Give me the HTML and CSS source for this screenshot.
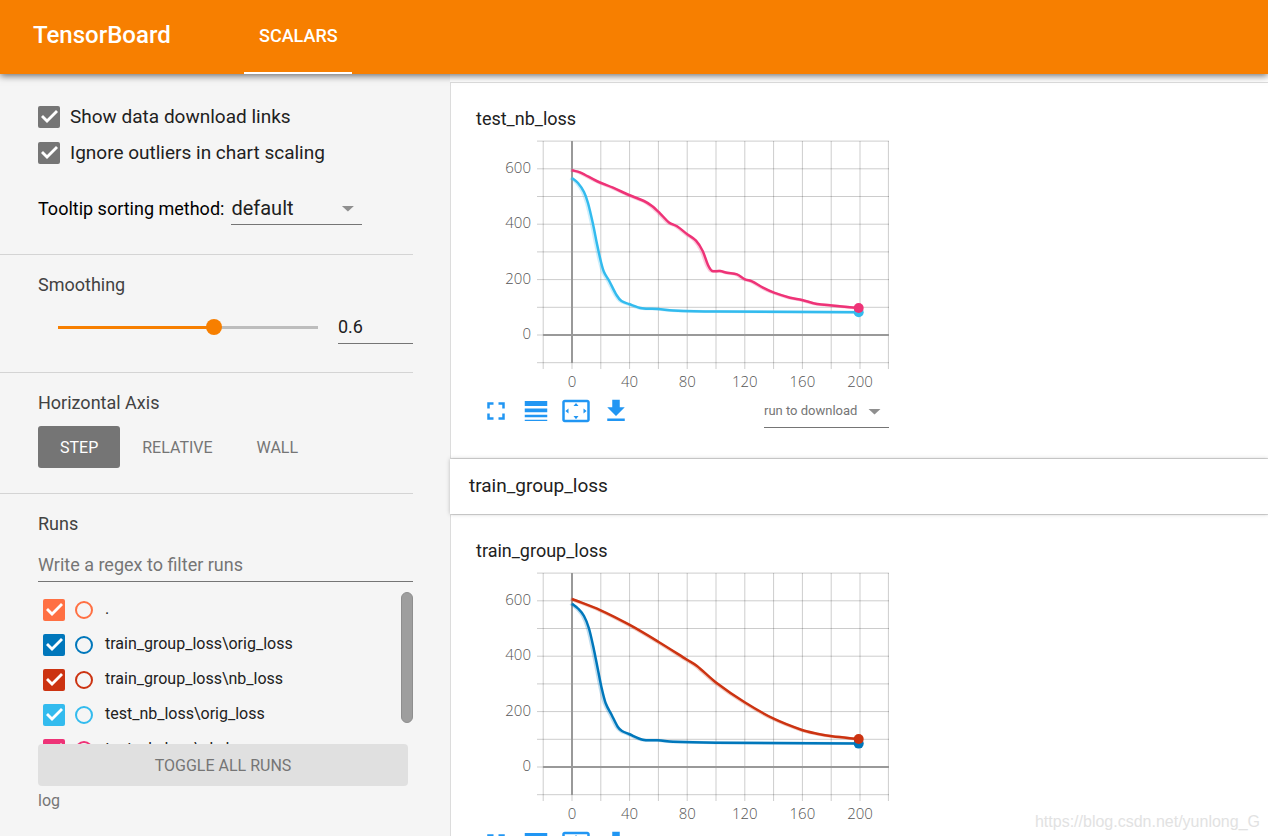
FILE: index.html
```html
<!DOCTYPE html>
<html lang="en">
<head>
<meta charset="utf-8">
<title>TensorBoard</title>
<link rel="stylesheet" href="styles.css">
</head>
<body>
<svg class="defs" aria-hidden="true">
  <symbol id="icon-fullscreen" viewBox="0 0 24 24"><path d="M7 14H5v5h5v-2H7v-3zm-2-4h2V7h3V5H5v5zm12 7h-3v2h5v-5h-2v3zM14 5v2h3v3h2V5h-5z"/></symbol>
  <symbol id="icon-lines" viewBox="0 0 24 24"><path d="M3 17h18v-2H3v2zm0 3h18v-1H3v1zm0-7h18v-3H3v3zm0-9v4h18V4H3z"/></symbol>
  <symbol id="icon-fit" viewBox="0 0 24 24"><path d="M12.01 5.5L10 8h4l-1.99-2.5zM18 10v4l2.5-1.99L18 10zM6 10l-2.5 2.01L6 14v-4zm8 6h-4l2.01 2.5L14 16zm7-13H3c-1.1 0-2 .9-2 2v14c0 1.1.9 2 2 2h18c1.1 0 2-.9 2-2V5c0-1.1-.9-2-2-2zm0 16.01H3V4.99h18v14.02z"/></symbol>
  <symbol id="icon-download" viewBox="0 0 24 24"><path d="M19 9h-4V3H9v6H5l7 7 7-7zM5 18v2h14v-2H5z"/></symbol>
</svg>
<div class="app">
  <header class="toolbar">
    <h1 class="brand">TensorBoard</h1>
    <nav class="tabs"><button class="tab" type="button">SCALARS</button></nav>
  </header>
  <div class="content">
    <aside class="sidebar">
      <section class="panel options">
        <label class="option"><input class="check" type="checkbox" checked><span class="option-text">Show data download links</span></label>
        <label class="option"><input class="check" type="checkbox" checked><span class="option-text">Ignore outliers in chart scaling</span></label>
        <div class="sorting">
          <label for="sort">Tooltip sorting method:</label>
          <span class="dropdown sort-dropdown"><select id="sort"><option>default</option></select></span>
        </div>
      </section>
      <section class="panel smoothing">
        <h2 class="label" id="smooth-label">Smoothing</h2>
        <div class="slider-row">
          <input class="slider" type="range" min="0" max="1" step="0.01" value="0.6" aria-labelledby="smooth-label">
          <input class="slider-value" type="text" value="0.6" aria-labelledby="smooth-label">
        </div>
      </section>
      <section class="panel axis">
        <h2 class="label">Horizontal Axis</h2>
        <div class="axis-buttons">
          <button class="axis-button selected" type="button">STEP</button>
          <button class="axis-button" type="button">RELATIVE</button>
          <button class="axis-button" type="button">WALL</button>
        </div>
      </section>
      <section class="panel runs">
        <h2 class="label">Runs</h2>
        <input class="filter" type="text" placeholder="Write a regex to filter runs" aria-label="Filter runs">
        <div class="run-list">
          <div class="run orange"><input class="check" id="r1" type="checkbox" checked><input class="radio" type="radio" name="only" aria-label="Only ."><label for="r1">.</label></div>
          <div class="run blue"><input class="check" id="r2" type="checkbox" checked><input class="radio" type="radio" name="only" aria-label="Only train_group_loss\orig_loss"><label for="r2">train_group_loss\orig_loss</label></div>
          <div class="run red"><input class="check" id="r3" type="checkbox" checked><input class="radio" type="radio" name="only" aria-label="Only train_group_loss\nb_loss"><label for="r3">train_group_loss\nb_loss</label></div>
          <div class="run cyan"><input class="check" id="r4" type="checkbox" checked><input class="radio" type="radio" name="only" aria-label="Only test_nb_loss\orig_loss"><label for="r4">test_nb_loss\orig_loss</label></div>
          <div class="run pink"><input class="check" id="r5" type="checkbox" checked><input class="radio" type="radio" name="only" aria-label="Only test_nb_loss\nb_loss"><label for="r5">test_nb_loss\nb_loss</label></div>
          <span class="scroll-thumb"></span>
        </div>
        <button class="toggle" type="button">TOGGLE ALL RUNS</button>
        <p class="logdir">log</p>
      </section>
    </aside>
    <main class="main">
      <div class="group-edge"></div>
      <section class="card">
        <h3 class="chart-title">test_nb_loss</h3>
        <svg class="chart" data-chart="test" viewBox="-96 -201 413 260" role="img" aria-label="test_nb_loss chart"></svg>
        <div class="chart-tools">
          <button class="icon-button" type="button" aria-label="Expand"><svg><use href="#icon-fullscreen"/></svg></button>
          <button class="icon-button" type="button" aria-label="Toggle log scale"><svg><use href="#icon-lines"/></svg></button>
          <button class="icon-button" type="button" aria-label="Fit to data"><svg><use href="#icon-fit"/></svg></button>
          <button class="icon-button" type="button" aria-label="Download"><svg><use href="#icon-download"/></svg></button>
          <span class="dropdown run-dropdown"><select aria-label="Run to download"><option>run to download</option></select></span>
        </div>
      </section>
      <h2 class="group-title">train_group_loss</h2>
      <section class="card">
        <h3 class="chart-title">train_group_loss</h3>
        <svg class="chart" data-chart="train" viewBox="-96 -201 413 260" role="img" aria-label="train_group_loss chart"></svg>
        <div class="chart-tools">
          <button class="icon-button" type="button" aria-label="Expand"><svg><use href="#icon-fullscreen"/></svg></button>
          <button class="icon-button" type="button" aria-label="Toggle log scale"><svg><use href="#icon-lines"/></svg></button>
          <button class="icon-button" type="button" aria-label="Fit to data"><svg><use href="#icon-fit"/></svg></button>
          <button class="icon-button" type="button" aria-label="Download"><svg><use href="#icon-download"/></svg></button>
        </div>
      </section>
    </main>
  </div>
  <span class="watermark">https://blog.csdn.net/yunlong_G</span>
</div>
<script src="charts.js"></script>
</body>
</html>
```

FILE: styles.css
```css
* { box-sizing: border-box; }

body {
  margin: 0;
  background: #fff;
  color: #212121;
  font-family: Roboto, "Liberation Sans", sans-serif;
  font-size: 18px;
}

h1, h2, h3, p { margin: 0; font-weight: 400; }
button, input, select { font: inherit; color: inherit; margin: 0; padding: 0; border: 0; background: none; outline: none; border-radius: 0; }
.defs { position: absolute; width: 0; height: 0; }

.app {
  position: relative;
  display: flex;
  flex-direction: column;
  height: calc(100vh - 4px);
  overflow: hidden;
}

.toolbar {
  position: relative;
  z-index: 2;
  flex: none;
  display: flex;
  height: 74px;
  padding-left: 33px;
  background: #f77f00;
  color: #fff;
  box-shadow: 0 2px 7px rgba(0, 0, 0, 0.55);
}
.brand { width: 211px; font-size: 24px; font-weight: 500; line-height: 70px; }
.tabs { display: flex; }
.tab { padding: 0 14px 2px 15px; border-bottom: 2px solid #fff; font-size: 18px; font-weight: 500; }

.content { flex: 1; display: flex; min-height: 0; }

.sidebar { flex: none; width: 450px; padding-right: 37px; background: #f5f5f5; }
.panel { padding-left: 38px; border-bottom: 1px solid #d4d4d4; }
.label { color: #424242; font-size: 18px; line-height: 24px; }

.options { height: 181px; padding-top: 32px; }
.option { display: flex; align-items: center; gap: 10px; height: 22px; margin-bottom: 14px; font-size: 19px; }
.option-text { padding-bottom: 2px; }
.sorting { display: flex; align-items: center; gap: 7px; margin-top: 27px; color: #000; }
.sorting label { font-size: 18px; }

.check {
  appearance: none;
  flex: none;
  width: 22px;
  height: 22px;
  border-radius: 2px;
  background: var(--run, #757575);
}
.check:checked::before {
  content: "";
  display: block;
  width: 22px;
  height: 22px;
  background: #fff;
  clip-path: polygon(3px 11px, 5px 9px, 9px 13px, 18px 4px, 20px 6px, 9px 17px);
}

.dropdown { position: relative; display: flex; border-bottom: 1px solid #757575; color: #212121; }
.dropdown::after {
  content: "";
  position: absolute;
  top: calc(50% - 2px);
  right: 8px;
  width: 13px;
  height: 6px;
  background: #8f8f8f;
  clip-path: polygon(0 0, 100% 0, 50% 100%);
  pointer-events: none;
}
.dropdown select { appearance: none; width: 100%; }
.sort-dropdown { width: 131px; height: 34px; font-size: 20px; }

.smoothing { height: 118px; padding-top: 18px; }
.slider-row { display: flex; align-items: center; gap: 12px; margin-top: 13px; padding-left: 12px; }
.slider {
  appearance: none;
  width: 276px;
  height: 16px;
  background: linear-gradient(to right, #f77f00 60%, #bdbdbd 60%) center / 260px 3px no-repeat;
}
.slider::-webkit-slider-thumb { appearance: none; width: 16px; height: 16px; border-radius: 50%; background: #f77f00; }
.slider-value { flex: 1; min-width: 0; height: 34px; border-bottom: 1px solid #757575; }

.axis { height: 121px; padding-top: 18px; }
.axis-buttons { display: flex; margin-top: 11px; }
.axis-button { height: 42px; padding: 0 22px; border-radius: 3px; color: #757575; font-size: 16px; }
.axis-button.selected { background: #757575; color: #fff; }

.runs { padding-top: 18px; border-bottom: 0; }
.filter { display: block; width: 100%; height: 34px; margin-top: 12px; border-bottom: 1px solid #757575; }
.filter::placeholder { color: #757575; opacity: 1; }
.run-list { position: relative; height: 162px; padding: 17px 5px 0; overflow: hidden; }
.run { display: flex; align-items: center; height: 22px; margin-bottom: 13px; font-size: 16px; }
.run label { margin-left: 12px; padding-bottom: 3px; }
.radio { appearance: none; width: 18px; height: 18px; margin-left: 10px; border: 2px solid var(--run); border-radius: 50%; }
.orange { --run: #ff7043; }
.blue { --run: #0077bb; }
.red { --run: #cc3311; }
.cyan { --run: #33bbee; }
.pink { --run: #ee3377; }
.scroll-thumb { position: absolute; top: 10px; right: 0; width: 12px; height: 131px; border: 1px solid #8e8e8e; border-radius: 6px; background: #9e9e9e; }
.toggle { display: block; width: calc(100% - 5px); height: 42px; border-radius: 4px; background: #e0e0e0; color: #757575; font-size: 16px; }
.logdir { margin-top: 4px; color: #757575; font-size: 16px; line-height: 22px; }

.main { flex: 1; min-width: 0; background: #fff; }
.group-edge { height: 8px; }
.card { padding: 24px 25px 30px; border: 1px solid #dcdcdc; border-width: 1px 0 1px 1px; }
.chart-title { margin-bottom: 3px; font-size: 18px; line-height: 24px; }
.chart { display: block; width: 413px; height: 260px; }
.group-title {
  position: relative;
  height: 55px;
  padding-left: 19px;
  font-size: 19px;
  line-height: 54px;
  background: #fff;
  box-shadow: 0 0 4px rgba(0, 0, 0, 0.25);
}

.chart-tools { display: flex; align-items: center; gap: 10px; width: 413px; height: 34px; padding-left: 5px; }
.icon-button { width: 30px; height: 30px; }
.icon-button svg { display: block; width: 30px; height: 30px; fill: #2196f3; }
.run-dropdown { width: 125px; height: 34px; margin-left: auto; color: #757575; font-size: 13px; }

.grid { stroke: #000; stroke-opacity: 0.2; fill: none; }
.axis-line { stroke: #999; stroke-width: 2; fill: none; }
.tick { fill: #555; font-family: "Open Sans", "Noto Sans", sans-serif; font-size: 15px; font-weight: 300; }
.tick-x { text-anchor: middle; }
.tick-y { text-anchor: end; }
.line { fill: none; stroke-width: 2.5; stroke-linejoin: round; }
.raw { fill: none; stroke-width: 3; stroke-opacity: 0.25; }

.watermark { position: absolute; right: 8px; bottom: 5px; color: #e2e2e2; font-family: "Liberation Sans", Arial, sans-serif; font-size: 16px; }
```

FILE: charts.js
```js
const series = {
  test: [
    { color: "#33bbee", points: [[0,-157],[6,-152],[12,-143],[16,-132],[21,-111],[25,-91],[29,-73],[32,-63],[37,-54.5],[44.5,-40],[49.5,-34],[57,-31],[70,-26.7],[86,-26],[101,-24.5],[145,-23.4],[286.7,-22.7]] },
    { color: "#ee3377", points: [[0,-164.7],[8,-162.7],[24.7,-154],[41,-147.3],[57,-140],[72,-134],[80,-129],[88,-121.7],[97,-112.5],[105,-108.7],[115,-101],[124,-94.3],[130.7,-84],[136,-70],[140,-64.2],[148,-64],[155,-62.3],[165,-60.7],[173,-55.7],[180,-53.7],[191,-47.3],[202,-42.3],[218,-37.3],[230,-35],[245,-31],[260,-29.5],[286.7,-27]] }
  ],
  train: [
    { color: "#0077bb", points: [[0,-163.3],[6,-158.5],[12,-151],[17,-138.5],[22,-117],[26,-97],[29.7,-78.7],[33.7,-63.7],[39.7,-52],[45.7,-40.3],[50,-36],[57,-33],[70.7,-27.3],[86,-26.7],[101,-25.3],[144,-24.3],[286.7,-23.4]] },
    { color: "#cc3311", points: [[0,-168],[28.7,-156.7],[57.3,-142.3],[86.3,-125.3],[115,-107.3],[125,-101],[144,-84.5],[172.7,-64.7],[201.7,-48.3],[230,-37],[245,-33.3],[260,-30.7],[286.7,-28]] }
  ]
};

const stepX = 28.8;
const stepY = 27.7;

function smoothPath(p) {
  let d = `M${p[0]}`;
  for (let i = 0; i < p.length - 1; i++) {
    const a = p[Math.max(i - 1, 0)], b = p[i], c = p[i + 1], e = p[Math.min(i + 2, p.length - 1)];
    const third = (c[0] - b[0]) / 3;
    const slopeB = (c[1] - a[1]) / (c[0] - a[0]);
    const slopeC = (e[1] - b[1]) / (e[0] - b[0]);
    d += `C${b[0] + third},${b[1] + third * slopeB} ${c[0] - third},${c[1] - third * slopeC} ${c}`;
  }
  return d;
}

document.querySelectorAll(".chart").forEach(svg => {
  let grid = "";
  let out = "";
  for (let i = -1; i <= 11; i++) {
    grid += `M${Math.min(i * stepX, 316.4)},-194V34`;
    if (i >= 0 && i % 2 === 0) out += `<text class="tick tick-x" x="${i * stepX}" y="52">${i * 20}</text>`;
  }
  for (let i = -1; i <= 7; i++) {
    grid += `M-35,${-i * stepY}H317`;
    if (i >= 0 && i % 2 === 0) out += `<text class="tick tick-y" x="-41" y="${4 - i * stepY}">${i * 100}</text>`;
  }
  out += `<path class="grid" d="${grid}"/><path class="axis-line" d="M-29,0H317M0,-194V28"/>`;
  series[svg.dataset.chart].forEach(s => {
    const d = smoothPath(s.points);
    const [x, y] = s.points[s.points.length - 1];
    out += `<path class="raw" stroke="${s.color}" transform="translate(-1.5 0)" d="${d}"/>`;
    out += `<path class="line" stroke="${s.color}" d="${d}"/><circle cx="${x}" cy="${y}" r="5" fill="${s.color}"/>`;
  });
  svg.innerHTML = out;
});
```
